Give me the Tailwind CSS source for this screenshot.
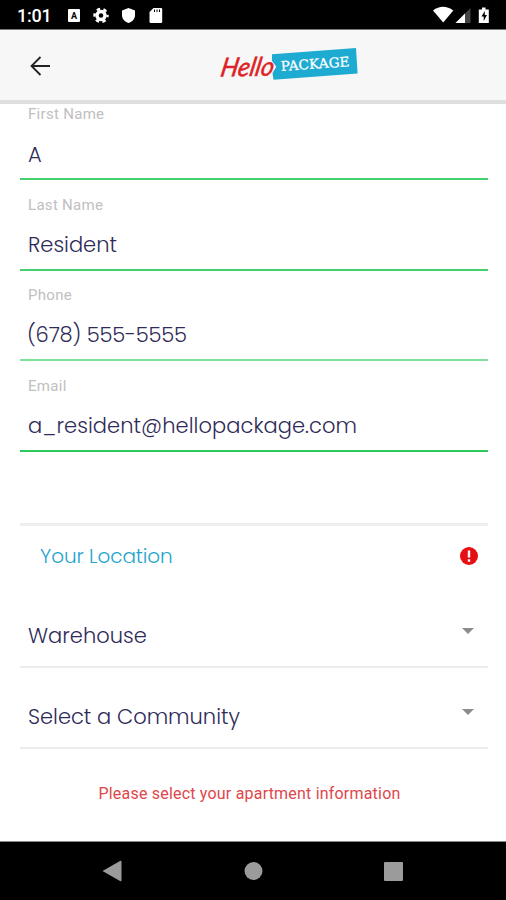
<!DOCTYPE html>
<html lang="en">
<head>
  <meta charset="UTF-8" />
  <meta name="viewport" content="width=device-width, initial-scale=1.0" />
  <title>HelloPackage</title>
  <script src="https://cdn.jsdelivr.net/npm/@tailwindcss/browser@4"></script>
</head>
<body class="bg-white h-[900px] flex flex-col overflow-hidden font-[Roboto,sans-serif]">
  <!-- Status bar -->
  <div class="h-[30px] shrink-0 bg-black border-b border-[#777] flex items-center text-white pl-[17px] pr-[16px]">
    <span class="w-[50px] text-[18px] font-medium leading-none tracking-[-.2px] pt-[3px]">1:01</span>
    <svg class="w-[106px] h-[29px]" viewBox="67 0 106 29" fill="#fff">
      <rect x="68" y="9" width="12" height="13" rx="1" />
      <text x="74" y="19" font-size="9" font-weight="700" text-anchor="middle" fill="#000">A</text>
      <circle cx="101" cy="15.500" r="4" fill="none" stroke="#fff" stroke-width="3.400" />
      <circle cx="101" cy="15.500" r="6.500" fill="none" stroke="#fff" stroke-width="2.400" stroke-dasharray="3.400 3.407" stroke-dashoffset="1.700" />
      <path d="M128.500 8l6.500 2.600v4.600c0 3.600-2.700 6.700-6.500 7.800-3.800-1.100-6.500-4.200-6.500-7.800v-4.600z" />
      <path d="M153.500 8h7.500q1.200 0 1.200 1.200v12.600q0 1.200-1.200 1.200h-10.300q-1.200 0-1.200-1.200V12z" />
      <path d="M154.500 9.500v2.500M157 9.500v2.500M159.500 9.500v2.500" stroke="#000" stroke-width="1" />
    </svg>
    <svg class="w-[58px] h-[29px] ml-auto" viewBox="432 0 58 29" fill="#fff">
      <path d="M433 10.500q10-7.500 20.300 0L443.200 22.500z" />
      <path d="M455.500 23L470.500 8v15z" fill="#444" />
      <path d="M455.500 23l9.500-9.500V23z" />
      <path d="M482 7.500h3.500v2h3.300V23h-10V9.500h3.200z" />
      <path d="M484.800 11l-3.300 5.500h2.200v4.500l3.200-6h-2.100z" fill="#000" />
    </svg>
  </div>

  <!-- Header -->
  <header class="h-[74px] shrink-0 bg-[#f7f7f7] border-b-4 border-[#dfdfdf] flex items-center">
    <svg class="w-[20px] h-[20px] ml-[30px] mt-[2px]" viewBox="0 0 20 20" fill="none" stroke="#222" stroke-width="1.800">
      <path d="M20 10H1.500M10.500 1L1.500 10l9 9" />
    </svg>
    <svg class="w-[140px] h-[36px] ml-[169px] -mt-[3px]" viewBox="219 45 140 36">
      <path d="M272 53.200L356 46.900 357.600 72.500 273.500 78.800l-1-6.800 3.800-6.300-4.300-5.700z" fill="#1eabd1" />
      <text font-family="Lato, sans-serif" font-style="italic" font-size="26" fill="#e01f26" stroke="#e01f26" stroke-width=".5" textLength="53" lengthAdjust="spacingAndGlyphs" transform="translate(219.500 75.500) rotate(-1) skewX(-12)">Hello</text>
      <text x="281" y="70" font-family="DejaVu Serif, serif" font-size="13.500" fill="#fff" stroke="#fff" stroke-width=".25" textLength="69" lengthAdjust="spacingAndGlyphs" transform="rotate(-4 281 70)">PACKAGE</text>
    </svg>
  </header>

  <!-- Resident form -->
  <main class="grow pl-[20px] pr-[18px] text-[#2f2b58]">
    <div class="h-[76px] border-b-2 border-[#45d070] px-[8px]">
      <label class="block h-[20px] leading-[21px] text-[15px] tracking-[.3px] text-[#c0c0c0]">First Name</label>
      <p class="pt-[17px] leading-[28px] text-[21px] font-light font-[Poppins,Inter,sans-serif]">A</p>
    </div>
    <div class="h-[90.500px] border-b-2 border-[#45d070] px-[8px] pt-[15px]">
      <label class="block h-[20px] leading-[21px] text-[15px] tracking-[.3px] text-[#c0c0c0]">Last Name</label>
      <p class="pt-[16px] leading-[28px] text-[21px] font-light font-[Poppins,Inter,sans-serif]">Resident</p>
    </div>
    <div class="h-[90.500px] border-b-2 border-[#7fe09a] px-[8px] pt-[14.500px]">
      <label class="block h-[20px] leading-[21px] text-[15px] tracking-[.3px] text-[#c0c0c0]">Phone</label>
      <p class="-ml-px pt-[16px] leading-[28px] text-[21px] tracking-[-.2px] font-light font-[Poppins,Inter,sans-serif]">(678) 555-5555</p>
    </div>
    <div class="h-[90.500px] border-b-2 border-[#2bc95c] px-[8px] pt-[15px]">
      <label class="block h-[20px] leading-[21px] text-[15px] tracking-[.3px] text-[#c0c0c0]">Email</label>
      <p class="pt-[16px] leading-[28px] text-[21px] tracking-[.06px] font-light font-[Poppins,Inter,sans-serif]">a_resident@hellopackage.com</p>
    </div>

    <!-- Location -->
    <section class="mt-[71px] border-t-3 border-[#eee]">
      <div class="h-[60px] flex items-center justify-between pl-[20px] pr-[10px]">
        <h2 class="text-[20px] tracking-[-.08px] font-light text-[#1ea5cd] font-[Poppins,Inter,sans-serif]">Your Location</h2>
        <svg class="w-[18px] h-[18px]" viewBox="0 0 18 18">
          <circle cx="9" cy="9" r="9" fill="#e60f14" />
          <path d="M9 3.500v7M9 12.300v2.400" stroke="#fff" stroke-width="2.400" />
        </svg>
      </div>
      <div class="h-[82px] border-b-2 border-[#ececec] flex justify-between pl-[8px] pr-[14px] pt-[36px]">
        <span class="leading-[28px] text-[21px] font-light font-[Poppins,Inter,sans-serif]">Warehouse</span>
        <svg class="w-[12px] h-[6px] mt-[6px]" viewBox="0 0 12 6" fill="#8c8c8c"><path d="M0 0h12L6 6z" /></svg>
      </div>
      <div class="h-[81px] border-b-2 border-[#ececec] flex justify-between pl-[8px] pr-[14px] pt-[35px]">
        <span class="leading-[28px] text-[21px] font-light font-[Poppins,Inter,sans-serif]">Select a Community</span>
        <svg class="w-[12px] h-[6px] mt-[6px]" viewBox="0 0 12 6" fill="#8c8c8c"><path d="M0 0h12L6 6z" /></svg>
      </div>
    </section>
    <p class="mt-[35px] pr-[9px] text-center leading-[20px] text-[16px] tracking-[.2px] text-[#e0464b]">Please select your apartment information</p>
  </main>

  <!-- Navigation bar -->
  <nav class="h-[59px] shrink-0 bg-black border-t border-[#888]">
    <svg class="w-full h-[58px]" viewBox="0 842 506 58" fill="#9b9b9b">
      <path d="M102.500 871l17.500-10q1.500-.8 1.500.8v18.400q0 1.600-1.500.8z" />
      <circle cx="253.500" cy="871" r="9" />
      <rect x="384" y="862" width="19" height="19" rx="1" />
    </svg>
  </nav>
</body>
</html>
